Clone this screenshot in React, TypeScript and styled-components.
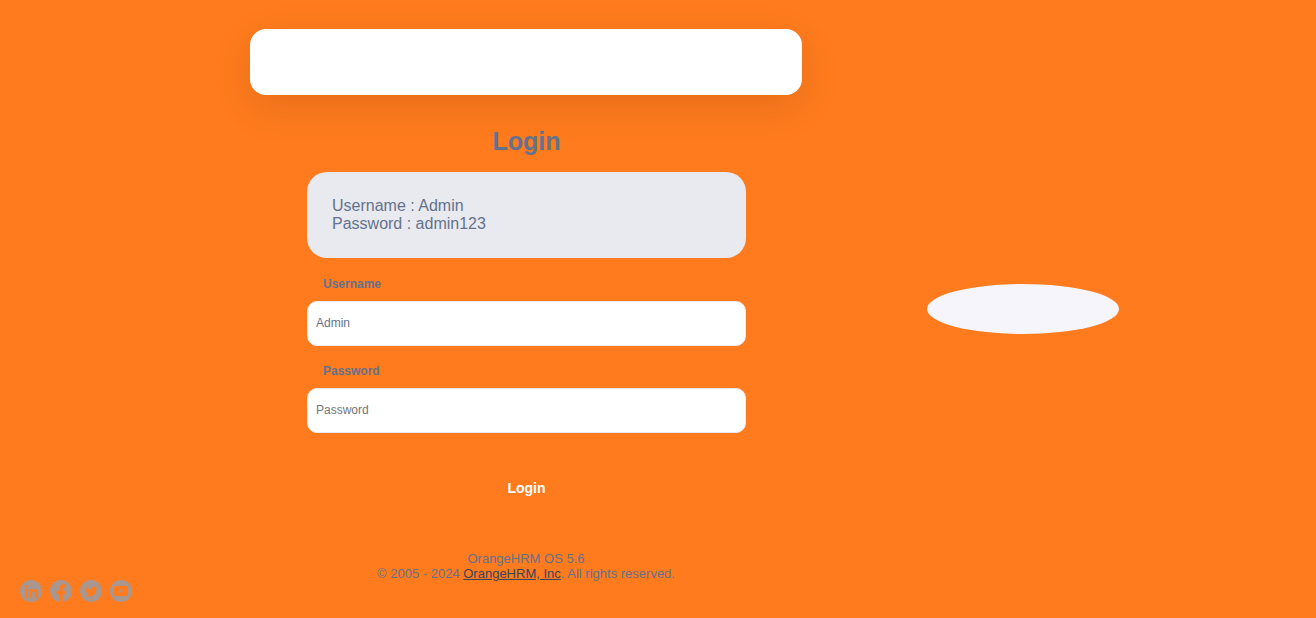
import React from "react";
import styled, { createGlobalStyle } from "styled-components";

const color = {
  brand: "#ff7b1d",
  text: "#64728c",
  link: "#38455d",
  social: "#a9968f",
  panel: "#e8eaef",
  badge: "#f6f5fb",
  white: "#ffffff",
};

const GlobalStyle = createGlobalStyle`
  *, *::before, *::after { box-sizing: border-box; }
  body {
    margin: 0;
    background: ${color.brand};
    color: ${color.text};
    font-family: "Liberation Sans", Arial, sans-serif;
  }
`;

const Page = styled.div`
  display: grid;
  grid-template-columns: 250fr 552fr 442fr 72fr;
  min-height: 100vh;
`;

const Social = styled.nav`
  align-self: end;
  display: flex;
  gap: 8px;
  padding: 0 0 16px 20px;
`;

const SocialLink = styled.a`
  display: block;
  width: 22px;
  height: 22px;
  color: ${color.social};

  svg {
    display: block;
    width: 100%;
    height: 100%;
  }
`;

const Column = styled.main`
  display: flex;
  flex-direction: column;
  padding: 29px 0;
`;

const LogoCard = styled.div`
  height: 66px;
  border-radius: 16px;
  background: ${color.white};
  box-shadow: 0 12px 40px rgba(0, 0, 0, 0.1);
`;

const Form = styled.form`
  display: flex;
  flex-direction: column;
  width: 100%;
  padding: 0 56px 0 57px;
`;

const Title = styled.h1`
  margin: 32px 0 17px;
  font-size: 25px;
  line-height: 28px;
  text-align: center;
`;

const Note = styled.div`
  margin-bottom: 18px;
  padding: 25px;
  border-radius: 20px;
  background: ${color.panel};
  font-size: 16px;
  line-height: 18px;

  p {
    margin: 0;
  }
`;

const Fields = styled.div`
  display: flex;
  flex-direction: column;
  gap: 17px;
`;

const Field = styled.div`
  display: flex;
  flex-direction: column;
  gap: 8px;
`;

const Label = styled.label`
  padding-left: 16px;
  font-size: 12px;
  font-weight: 700;
  line-height: 17px;
`;

const Input = styled.input`
  width: 100%;
  height: 45px;
  padding: 0 8px 2px;
  border: 1px solid ${color.panel};
  border-radius: 10px;
  background: ${color.white};
  color: ${color.text};
  font: 12px "Liberation Sans", Arial, sans-serif;

  &::placeholder {
    color: #757575;
  }
`;

const Submit = styled.button`
  height: 48px;
  margin: 31px 0 39px;
  border: 0;
  border-radius: 24px;
  background: ${color.brand};
  color: ${color.white};
  font: 700 14px "Liberation Sans", Arial, sans-serif;
  cursor: pointer;
`;

const Copyright = styled.footer`
  font-size: 13px;
  line-height: 15px;
  text-align: center;

  p {
    margin: 0;
  }

  a {
    color: ${color.link};
  }
`;

const Side = styled.aside`
  display: grid;
  place-items: center;
`;

const Badge = styled.div`
  width: 192px;
  height: 50px;
  border-radius: 50%;
  background: ${color.badge};
`;

function MaskedDisc({ id, children }: { id: string; children: React.ReactNode }) {
  return (
    <svg viewBox="0 0 22 22" aria-hidden="true">
      <mask id={id}>
        <rect width="22" height="22" fill="#fff" />
        {children}
      </mask>
      <circle cx="11" cy="11" r="11" fill="currentColor" mask={`url(#${id})`} />
    </svg>
  );
}

function LinkedInIcon() {
  return (
    <MaskedDisc id="linkedin">
      <path
        transform="translate(5 5) scale(0.0283)"
        d="M100.28 448H7.4V148.9h92.88zM53.79 108.1C24.09 108.1 0 83.5 0 53.8a53.79 53.79 0 0 1 107.58 0c0 29.7-24.1 54.3-53.79 54.3zM447.9 448h-92.68V302.4c0-34.7-.7-79.2-48.29-79.2-48.29 0-55.69 37.7-55.69 76.7V448h-92.78V148.9h89.08v40.8h1.3c12.4-23.5 42.69-48.3 87.88-48.3 94 0 111.28 61.9 111.28 142.3V448z"
      />
    </MaskedDisc>
  );
}

function FacebookIcon() {
  return (
    <svg viewBox="8 8 496 496" aria-hidden="true">
      <path
        fill="currentColor"
        d="M504 256C504 119 393 8 256 8S8 119 8 256c0 123.78 90.69 226.38 209.25 245V327.69h-63V256h63v-54.64c0-62.15 37-96.48 93.67-96.48 27.14 0 55.52 4.84 55.52 4.84v61h-31.28c-30.8 0-40.41 19.12-40.41 38.73V256h68.78l-11 71.69h-57.78V501C413.31 482.38 504 379.78 504 256z"
      />
    </svg>
  );
}

function TwitterIcon() {
  return (
    <MaskedDisc id="twitter">
      <path
        transform="translate(5.4 5.7) scale(0.5)"
        d="M23.953 4.57a10 10 0 01-2.825.775 4.958 4.958 0 002.163-2.723c-.951.555-2.005.959-3.127 1.184a4.92 4.92 0 00-8.384 4.482C7.69 8.095 4.067 6.13 1.64 3.162a4.822 4.822 0 00-.666 2.475c0 1.71.87 3.213 2.188 4.096a4.904 4.904 0 01-2.228-.616v.06a4.923 4.923 0 003.946 4.827 4.996 4.996 0 01-2.212.085 4.936 4.936 0 004.604 3.417 9.867 9.867 0 01-6.102 2.105c-.39 0-.779-.023-1.17-.067a13.995 13.995 0 007.557 2.209c9.053 0 13.998-7.496 13.998-13.985 0-.21 0-.42-.015-.63A9.935 9.935 0 0024 4.59z"
      />
    </MaskedDisc>
  );
}

function YouTubeIcon() {
  return (
    <MaskedDisc id="youtube">
      <rect x="4" y="6" width="14" height="10" rx="2" />
      <path d="M9.2 8.8v4.4l3.9-2.2z" fill="#fff" />
    </MaskedDisc>
  );
}

const socialLinks = [
  { name: "LinkedIn", href: "https://www.linkedin.com/company/orangehrm", Icon: LinkedInIcon },
  { name: "Facebook", href: "https://www.facebook.com/OrangeHRM", Icon: FacebookIcon },
  { name: "Twitter", href: "https://twitter.com/orangehrm", Icon: TwitterIcon },
  { name: "YouTube", href: "https://www.youtube.com/c/OrangeHRMInc", Icon: YouTubeIcon },
];

export default function App() {
  return (
    <>
      <GlobalStyle />
      <Page>
        <Social>
          {socialLinks.map(({ name, href, Icon }) => (
            <SocialLink key={name} href={href} aria-label={name}>
              <Icon />
            </SocialLink>
          ))}
        </Social>
        <Column>
          <LogoCard />
          <Form onSubmit={(event) => event.preventDefault()}>
            <Title>Login</Title>
            <Note>
              <p>Username : Admin</p>
              <p>Password : admin123</p>
            </Note>
            <Fields>
              <Field>
                <Label htmlFor="username">Username</Label>
                <Input id="username" name="username" defaultValue="Admin" />
              </Field>
              <Field>
                <Label htmlFor="password">Password</Label>
                <Input id="password" name="password" type="password" placeholder="Password" />
              </Field>
            </Fields>
            <Submit type="submit">Login</Submit>
          </Form>
          <Copyright>
            <p>OrangeHRM OS 5.6</p>
            <p>
              © 2005 - 2024 <a href="http://www.orangehrm.com">OrangeHRM, Inc</a>. All rights reserved.
            </p>
          </Copyright>
        </Column>
        <Side>
          <Badge />
        </Side>
      </Page>
    </>
  );
}
